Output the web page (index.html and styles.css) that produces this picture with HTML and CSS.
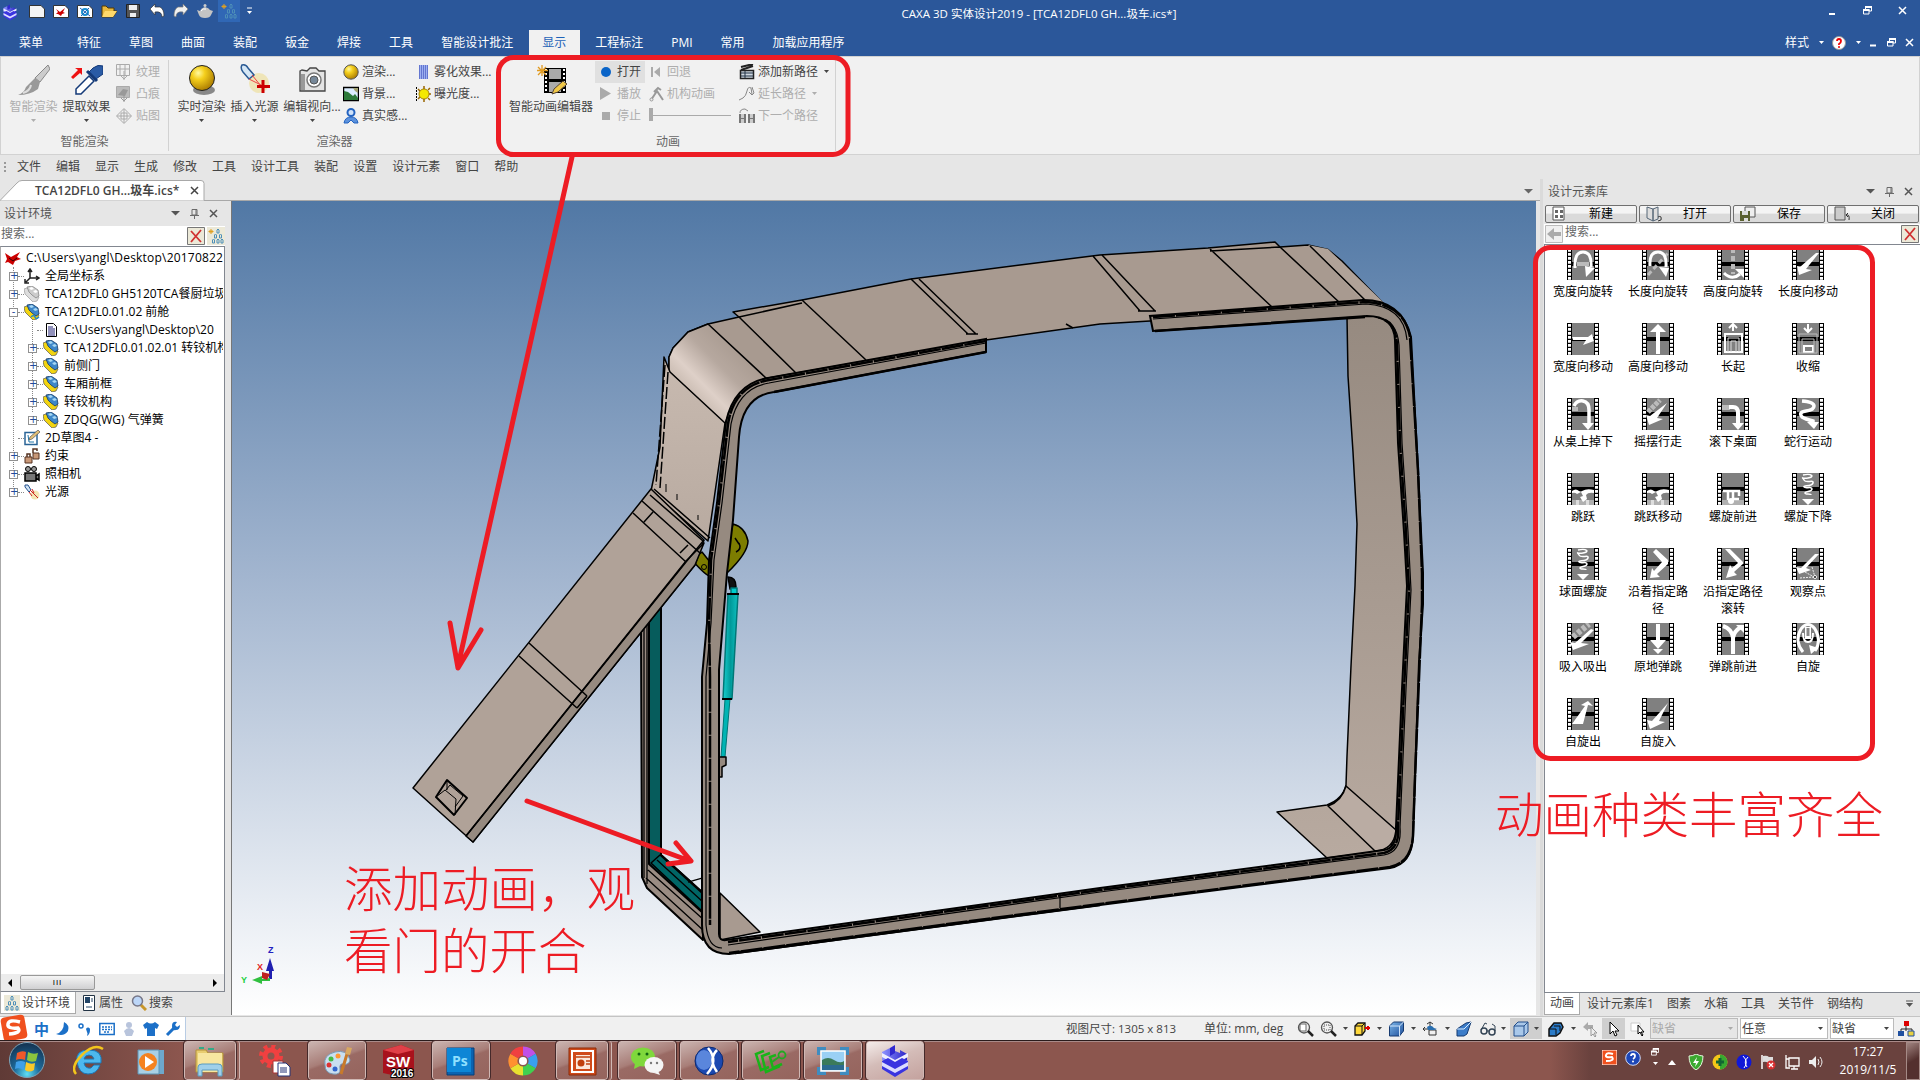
FILE: index.html
```html
<!DOCTYPE html>
<html lang="zh-CN">
<head>
    <meta charset="UTF-8">
    <meta name="viewport" content="width=device-width, initial-scale=1.0">
    <title>CAXA 3D 实体设计2019</title>
    <link rel="stylesheet" href="styles.css">
</head>
<body>
<!-- 图标定义 -->
<svg class="defs" width="0" height="0">
    <defs>
        <linearGradient id="cx" x1="0" y1="0" x2="1" y2="0"><stop offset="0" stop-color="#8f94ff"/><stop offset="1" stop-color="#2a22c8"/></linearGradient>
        <radialGradient id="gold" cx=".35" cy=".3" r=".75"><stop offset="0" stop-color="#fff9a0"/><stop offset=".35" stop-color="#f5cf1c"/><stop offset="1" stop-color="#a87800"/></radialGradient>
        <radialGradient id="orb" cx=".5" cy=".9" r=".9"><stop offset="0" stop-color="#5fe0f5"/><stop offset=".4" stop-color="#1d6c9c"/><stop offset="1" stop-color="#14304e"/></radialGradient>
        <linearGradient id="blu" x1="0" y1="0" x2="1" y2="1"><stop offset="0" stop-color="#7ab6ea"/><stop offset="1" stop-color="#1f4e9a"/></linearGradient>
    </defs>
    <symbol id="i-caxa" viewBox="0 0 32 32"><path d="M3 7l8-4v5l5-2 5 2V5l7 4v6l-12 6-13-6z" fill="url(#cx)"/><path d="M3 8l13 7 13-7v4l-13 7-13-7z" fill="#eeeeff"/><path d="M11 3l5-3v8l-5 3z" fill="#3028d0"/><path d="M3 16l6-3 7 4 7-4 6 3v8l-13 8-13-8z" fill="#3a34e0"/><path d="M3 17l13 7 13-7v4l-13 7-13-7z" fill="#dcdcff"/></symbol>
    <symbol id="i-down" viewBox="0 0 7 4"><path d="M1 0h5L3.500 3z" fill="currentColor"/></symbol>
    <symbol id="i-wide" viewBox="0 0 9 5"><path d="M0 0h9L4.500 4.500z" fill="currentColor"/></symbol>
    <symbol id="i-pin" viewBox="0 0 9 10"><path d="M2 .5h5V6H2zM6 .5V6M0 6.500h9M4.500 6v4" fill="none" stroke="#6a6a6a"/></symbol>
    <symbol id="i-x" viewBox="0 0 9 9"><path d="M1 1l7 7M8 1L1 8" fill="none" stroke="currentColor" stroke-width="1.500"/></symbol>
    <symbol id="i-restore" viewBox="0 0 9 9"><path d="M2.500 3V1h6v4H6M.5 3.500H6V8H.5z" fill="none" stroke="#fff"/><path d="M2 1h7M0 4h6.500" stroke="#fff" stroke-width="2"/></symbol>
    <symbol id="i-redx" viewBox="0 0 18 18"><path d="M.5.5h17v17H.5z" fill="#ece9d8" stroke="#777"/><path d="M4 4l10 11M14 3L4 15" fill="none" stroke="#d03030" stroke-width="1.800"/></symbol>
    <symbol id="i-people" viewBox="0 0 16 16"><path d="M3 1v5M.5 3.500h5M1.500 2l3 3M4.500 2l-3 3" stroke="#e0a020"/><g fill="none" stroke="#4d8fb8"><path d="M9 5V2l1-1 1 1v3zM6.500 10V7l1-1 1 1v3zM11.500 10V7l1-1 1 1v3zM4.500 15v-3l1-1 1 1v3zM9 15v-3l1-1 1 1v3zM13 15v-3l1-1 1 1v3z"/></g></symbol>
    <symbol id="i-box" viewBox="0 0 16 16"><path d="M0 3l3-1 12 9-2 4-4 1-8-8z" fill="#f2d410" stroke="#555" stroke-width=".7"/><path d="M3 1l5-1 3 2 3 2 1 6-3 2-4-3-3-3z" fill="#3d86c8" stroke="#153a66" stroke-width=".8"/><path d="M5 2l3-1 2 2-3 1zM9 5l3-1 2 2-3 1z" fill="#a8d8f4"/></symbol>
    <symbol id="i-graybox" viewBox="0 0 16 16"><path d="M0 3l3-1 12 9-2 4-4 1-8-8z" fill="#ddd" stroke="#999" stroke-width=".7"/><path d="M3 1l5-1 3 2 3 2 1 6-3 2-4-3-3-3z" fill="#ccc" stroke="#888" stroke-width=".8"/><path d="M5 2l3-1 2 2-3 1zM9 5l3-1 2 2-3 1z" fill="#fff"/></symbol>
    <symbol id="i-light" viewBox="0 0 16 16"><circle cx="11" cy="11" r="4.500" fill="#f3e6b4"/><path d="M1 1l3 0 3 5-2 2-4-5z" fill="#cfe3f5" stroke="#234f8c"/><path d="M6 6l8 8M8 5l2 4M5 8l3 4" stroke="#c22"/></symbol>
    <symbol id="i-cube" viewBox="0 0 16 16"><path d="M1 5l4-4h10v9l-4 5H1z" fill="url(#blu)" stroke="#163a70"/><path d="M1 5h10v10M11 5l4-4" fill="none" stroke="#cfe4fa"/></symbol>
    <!-- 胶片底 -->
    <symbol id="film" viewBox="0 0 32 32"><path d="M0 0h32v32H0z"/><path d="M5 0h22v14H5zM5 18h22v14H5z" fill="#808080"/><path d="M2.500 1v31M29.500 1v31" stroke="#fff" stroke-width="3" stroke-dasharray="2.700 1.300"/></symbol>
    <symbol id="hop" viewBox="0 0 32 32"><path d="M5 27h22v5H5z" fill="#b0b0b0"/><path d="M9 27h3v5H9zM19 27h3v5h-3z" fill="#ddd"/><path d="M5 18q4-3 7 0q2 2 3 0q5-3 12-1v3q-6-1-8 2l1 4-4 3-3-5 3-1-2-4-4 2q-2-2-5-1z" fill="#fff"/></symbol>
    <symbol id="spring" viewBox="0 0 32 32"><path d="M11 2c9-2 12 2 5 3s-6-2-4 2 10-1 9 3-10 2-9 4 8-1 8 2-7 2-7 4 6 0 6 2" fill="none" stroke="#fff" stroke-width="1.500"/><path d="M10 26h12l-6 6z" fill="#fff"/></symbol>
</svg>

<div class="app">
    <header class="top">
        <div class="titlebar">
            <svg class="logo" width="16" height="17"><use href="#i-caxa"/></svg>
            <div class="quick">
                <svg width="16" height="16"><path d="M.5 2.500H12l3.500 3.500v8.500H.5z" fill="#f4f4f4" stroke="#333"/></svg>
                <svg width="16" height="16"><path d="M.5 2.500H12l3.500 3.500v8.500H.5z" fill="#fff" stroke="#333"/><path d="M3 6l4 3 5-4-2 4 2 1-3 1-1 2-3-2-2 0 2-2z" fill="#c00"/></svg>
                <svg width="16" height="16"><path d="M.5 2.500H12l3.500 3.500v8.500H.5z" fill="#fff" stroke="#333"/><circle cx="8" cy="9" r="3" fill="none" stroke="#1b8fd0" stroke-width="2"/><path d="M3 5l10 8M12 5l-8 8" stroke="#26b"/></svg>
                <svg width="16" height="16"><path d="M1 14V3h4l2 2h6v3h3l-4 6z" fill="#e8b93e" stroke="#553a00"/><path d="M4 8h12l-4 6H1z" fill="#ffd96b"/></svg>
                <svg width="16" height="16"><path d="M1.500 1.500h13v13h-13z" fill="#555" stroke="#222"/><path d="M4 2h8v5H4zM5 10h6v4H5z" fill="#eee"/></svg>
                <svg width="16" height="16"><path d="M1 6l5-5v3h5q4 2 4 9l-2 1q0-6-7-5v3z" fill="#fff" stroke="#333" stroke-width=".7"/></svg>
                <svg width="16" height="16"><path d="M15 6l-5-5v3H5q-4 2-4 9l2 1q0-6 7-5v3z" fill="#f0f0f0" stroke="#777" stroke-width=".7"/></svg>
                <svg width="16" height="16"><path d="M0 7l3 1q1-3 5-4 4 1 5 3l3 1-2 4q-1 3-6 3t-6-3z" fill="#c4c4c4"/><circle cx="8" cy="2.500" r="1.500" fill="#ccc"/><path d="M4 8q2-3 5-2" stroke="#fff" fill="none"/></svg>
                <span class="quick-on"><svg width="16" height="16"><use href="#i-people"/></svg></span>
                <svg class="more" width="7" height="8"><path d="M1 1h5" stroke="#fff"/><path d="M1 4h5L3.500 7z" fill="#fff"/></svg>
            </div>
            <div class="title">CAXA 3D 实体设计2019 - [TCA12DFL0 GH...圾车.ics*]</div>
            <div class="winbtns">
                <svg width="9" height="9"><path d="M1 8h6" stroke="#fff" stroke-width="2"/></svg>
                <svg width="9" height="9"><use href="#i-restore"/></svg>
                <svg width="9" height="9"><use href="#i-x"/></svg>
            </div>
        </div>
        <nav class="tabs">
            <a class="first">菜单</a><a>特征</a><a>草图</a><a>曲面</a><a>装配</a><a>钣金</a><a>焊接</a><a>工具</a><a>智能设计批注</a><a class="active">显示</a><a>工程标注</a><a>PMI</a><a>常用</a><a>加载应用程序</a>
            <div class="tabs-right">
                <span>样式</span>
                <svg width="7" height="4"><use href="#i-down"/></svg>
                <svg class="help" width="14" height="14"><circle cx="7" cy="7" r="6.500" fill="#fff" stroke="#999"/><path d="M5 5q0-2 2-2t2 2-2 3v1" fill="none" stroke="#e00" stroke-width="1.800"/><circle cx="7" cy="11" r="1" fill="#e00"/></svg>
                <svg width="7" height="4"><use href="#i-down"/></svg>
                <svg width="9" height="9"><path d="M1 7.500h6" stroke="#fff" stroke-width="2"/></svg>
                <svg width="9" height="9"><use href="#i-restore"/></svg>
                <svg width="9" height="9"><use href="#i-x"/></svg>
            </div>
        </nav>
    </header>

    <!-- 功能区 -->
    <section class="ribbon">
        <div class="group g1">
            <div class="group-body">
                <div class="big off"><svg width="32" height="32"><path d="M30 1l2 4-10 13-5-4z" fill="#ccc" stroke="#888"/><path d="M17 14l5 4-2 7Q12 31 0 31q6-2 8-8z" fill="#999"/><path d="M5 29q7-2 8-8" stroke="#ddd" fill="none" stroke-width="2"/></svg><span>智能渲染</span><svg width="7" height="4"><use href="#i-down"/></svg></div>
                <div class="big"><svg width="32" height="32"><path d="M0 13l7-7-3-2h7v7l-2-2-7 6z" fill="#e11"/><path d="M22 4q5-4 10-2v8l-7 5-7-7z" fill="#2a5ba5" stroke="#143a78"/><path d="M16 7l10 10" stroke="#143a78" stroke-width="3"/><path d="M18 12L5 25v5h5l13-13z" fill="#fff" stroke="#143a78" stroke-width="1.500"/></svg><span>提取效果</span><svg width="7" height="4"><use href="#i-down"/></svg></div>
                <div class="small-col off c1">
                    <div><svg width="16" height="16"><path d="M.5.500h13v11H.500zM4 1v10M9 1v10M1 5h12M8 7v9M5 12l3 3 3-3" fill="none" stroke="#aaa"/></svg>纹理</div>
                    <div><svg width="16" height="16"><path d="M.5.500h13v11H.500z" fill="#bbb" stroke="#aaa"/><path d="M2 9l5-6 5 1-3 6z" fill="#999"/><path d="M8 7v9M5 12l3 3 3-3" stroke="#999" fill="none"/></svg>凸痕</div>
                    <div><svg width="16" height="16"><path d="M8 .5L15.500 8 8 15.500.5 8zM8 1v14M1 8h14M5 5h6v6H5z" fill="none" stroke="#aaa"/></svg>贴图</div>
                </div>
            </div>
            <div class="group-name">智能渲染</div>
        </div>
        <div class="group g2">
            <div class="group-body">
                <div class="big"><svg width="32" height="32"><ellipse cx="18" cy="26" rx="11" ry="5" fill="#888"/><circle cx="16" cy="14" r="12.500" fill="url(#gold)" stroke="#222"/></svg><span>实时渲染</span><svg width="7" height="4"><use href="#i-down"/></svg></div>
                <div class="big"><svg width="32" height="32"><circle cx="20" cy="19" r="10" fill="#efe5b8"/><path d="M3 1q4-1 6 3l6 7-5 4-6-7Q1 4 3 1z" fill="#d6e7f5" stroke="#2b5a94" stroke-width="1.500"/><path d="M13 11l9 11M10 15l14 7" stroke="#e44"/><path d="M24 16v13M18 22.500h13" stroke="#c00" stroke-width="3"/></svg><span>插入光源</span><svg width="7" height="4"><use href="#i-down"/></svg></div>
                <div class="big cam"><svg width="32" height="32"><path d="M4 7l2-1 5 1 3-3h6l3 3h6v20H4z" fill="#e4e4e4" stroke="#444" stroke-width="1.300"/><path d="M5 10v16h4V10z" fill="#999"/><circle cx="18" cy="16" r="7" fill="#fff" stroke="#777" stroke-width="1.500"/><circle cx="18" cy="16" r="4" fill="#789" stroke="#555"/></svg><span>编辑视向...</span><svg width="7" height="4"><use href="#i-down"/></svg></div>
                <div class="small-col c2">
                    <div><svg width="16" height="16"><circle cx="8" cy="8" r="7.200" fill="url(#gold)" stroke="#555"/></svg>渲染...</div>
                    <div><svg width="16" height="16"><path d="M.5 1.500h15v13H.5z" fill="#dceeff" stroke="#000" stroke-width="1.500"/><path d="M1 5l4 1 5 4 2-2 3 4v2H1z" fill="#2d7a3a"/><path d="M10 2h5v5l-3-2z" fill="#a0a070"/></svg>背景...</div>
                    <div><svg width="16" height="16"><circle cx="8" cy="4.500" r="3.500" fill="#cfe2fa" stroke="#2363c0" stroke-width="2"/><path d="M1 15q1-6 7-6t7 6l-4 0-3-3-3 3z" fill="#5b91dc" stroke="#2363c0"/></svg>真实感...</div>
                </div>
                <div class="small-col c3">
                    <div><svg width="16" height="16"><path d="M4 1h9v14H4z" fill="#9db0f0"/><path d="M4 2h9M4 4h9M4 6h9M4 8h9M4 10h9M4 12h9M4 14h9" stroke="#2b3cb0" stroke-dasharray="1 1"/></svg>雾化效果...</div>
                    <div><svg width="16" height="16"><circle cx="9" cy="8" r="5" fill="#f4e800" stroke="#a80"/><path d="M9 0v3M9 13v3M3 3l2 2M13 12l2 2M3 13l2-2M13 4l2-2M14 8h2" stroke="#960" stroke-width="1.500"/><path d="M1.500 1v14" stroke="#000" stroke-dasharray="2 1"/></svg>曝光度...</div>
                </div>
            </div>
            <div class="group-name">渲染器</div>
        </div>
        <div class="group g3">
            <div class="group-body">
                <div class="big anim"><svg width="34" height="32"><path d="M10 4h22v25H10z"/><path d="M15 5h12v10H15zM15 18h12v10H15z" fill="#aaa"/><path d="M12 5v24M30 5v24" stroke="#fff" stroke-width="2" stroke-dasharray="2 2"/><path d="M8 1v11M3 6.500h11M4 3l8 8M12 3l-8 8" stroke="#e09a20" stroke-width="1.300"/><path d="M18 30l2-5 9-8 4 3-9 8z" fill="#f0c848" stroke="#543"/></svg><span>智能动画编辑器</span></div>
                <div class="small-col c4">
                    <div class="on"><svg width="16" height="16"><circle cx="8" cy="8" r="5" fill="#0a64c8"/></svg>打开</div>
                    <div class="off"><svg width="16" height="16"><path d="M2 1l11 6.500L2 14z" fill="#aaa"/></svg>播放</div>
                    <div class="off"><svg width="16" height="16"><path d="M4 4h8v8H4z" fill="#aaa"/></svg>停止</div>
                </div>
                <div class="small-col c5 off">
                    <div><svg width="16" height="16"><path d="M3 3v10" stroke="#aaa" stroke-width="2"/><path d="M11 3v10L5 8z" fill="#aaa"/></svg>回退</div>
                    <div><svg width="16" height="16"><path d="M2 14l6-9 6 9M5 6l4-4 3 2" fill="none" stroke="#999" stroke-width="2"/><circle cx="2.500" cy="13.500" r="1.500" fill="#eee" stroke="#999"/></svg>机构动画</div>
                    <div class="slider"><i></i></div>
                </div>
                <div class="small-col c6">
                    <div><svg width="16" height="16"><path d="M2 6l12-4M2 3l12-3" stroke="#222" stroke-width="2"/><path d="M1.500 6.500h13v8h-13z" fill="#cfd8e0" stroke="#222" stroke-width="1.500"/><path d="M2 9h12M2 12h12M6 7v7" stroke="#234"/></svg>添加新路径<svg class="ar" width="7" height="4"><use href="#i-down"/></svg></div>
                    <div class="off"><svg width="16" height="16"><path d="M0 14l4-2q3-2 4-7t4-3l1 6M10 6l3 3 2-2-2-6" fill="none" stroke="#888"/></svg>延长路径<svg class="ar" width="7" height="4"><use href="#i-down"/></svg></div>
                    <div class="off"><svg width="16" height="16"><path d="M0 6h7v9H0zM9 6h7v9H9z" fill="#777"/><path d="M2 6h3v4H2zM2 11h3v4H2zM11 6h3v4h-3zM11 11h3v4h-3z" fill="#ccc"/><path d="M1 5q0-4 5-4l3 2" fill="none" stroke="#888"/></svg>下一个路径</div>
                </div>
            </div>
            <div class="group-name">动画</div>
        </div>
    </section>

    <nav class="menubar"><i class="grip"></i><a>文件</a><a>编辑</a><a>显示</a><a>生成</a><a>修改</a><a>工具</a><a>设计工具</a><a>装配</a><a>设置</a><a>设计元素</a><a>窗口</a><a>帮助</a></nav>

    <main class="body">
        <div class="work">
            <div class="docbar">
                <div class="doctab"><svg class="tabshape" width="205" height="21"><path d="M0 20.500L17 3q2-2.500 5-2.500h179q3 0 3 3v17" fill="#fff" stroke="#a8a8a8"/></svg><b>TCA12DFL0 GH...圾车.ics*</b><svg width="9" height="9"><use href="#i-x"/></svg></div>
                <svg class="doclist" width="9" height="5"><use href="#i-wide"/></svg>
            </div>
            <div class="work-row">
                <aside class="left">
                    <div class="panel-head"><span>设计环境</span><svg width="9" height="5"><use href="#i-wide"/></svg><svg width="9" height="10"><use href="#i-pin"/></svg><svg width="9" height="9"><use href="#i-x"/></svg></div>
                    <div class="search"><span>搜索...</span><svg width="18" height="18"><use href="#i-redx"/></svg><span class="tan"><svg width="16" height="16"><use href="#i-people"/></svg></span></div>
                    <div class="tree">
                        <ul>
                            <li class="root"><svg width="16" height="16"><path d="M0 3l6 4 9-5-3 5 4 2-6 2-2 4-5-3-3 1 2-4z" fill="#c00"/><path d="M4 8l4 3 4-3" stroke="#300" fill="none"/></svg>C:\Users\yangl\Desktop\20170822</li>
                            <li class="l1"><i class="ex">+</i><svg width="16" height="16"><path d="M6 10V2M6 10h9M6 10l-4 4M4 4l2-3 2 3M12 8l3 2-3 2M1 11v4h4" fill="none" stroke="#222" stroke-width="1.500"/></svg>全局坐标系</li>
                            <li class="l1"><i class="ex">+</i><svg width="16" height="16"><use href="#i-graybox"/></svg>TCA12DFL0 GH5120TCA餐厨垃圾</li>
                            <li class="l1"><i class="ex">-</i><svg width="16" height="16"><use href="#i-box"/><path d="M7 13q3-3 4 0t4 0" fill="none" stroke="#28c" stroke-width="1.500"/></svg>TCA12DFL0.01.02 前舱</li>
                            <li class="l2"><i class="ex none"></i><svg width="16" height="16"><path d="M3.500 1.500h7l3 3v10h-10z" fill="#fff" stroke="#000"/><path d="M5 5h5M5 7h7M5 9h7M5 11h7M5 13h7" stroke="#227"/></svg>C:\Users\yangl\Desktop\20</li>
                            <li class="l2"><i class="ex">+</i><svg width="16" height="16"><use href="#i-box"/></svg>TCA12DFL0.01.02.01 转铰机构</li>
                            <li class="l2"><i class="ex">+</i><svg width="16" height="16"><use href="#i-box"/></svg>前侧门</li>
                            <li class="l2"><i class="ex">+</i><svg width="16" height="16"><use href="#i-box"/></svg>车厢前框</li>
                            <li class="l2"><i class="ex">+</i><svg width="16" height="16"><use href="#i-box"/></svg>转铰机构</li>
                            <li class="l2"><i class="ex">+</i><svg width="16" height="16"><use href="#i-box"/></svg>ZDQG(WG) 气弹簧</li>
                            <li class="l1"><i class="ex none"></i><svg width="16" height="16"><path d="M1 2.500h12v12H1z" fill="#fff" stroke="#2a6496" stroke-width="1.500"/><path d="M4 5l1 7h5" fill="none" stroke="#27a"/><path d="M5 10l1-3 8-7 2 2-8 7z" fill="#e2c078" stroke="#555" stroke-width=".7"/></svg>2D草图4 -</li>
                            <li class="l1"><i class="ex">+</i><svg width="16" height="16"><path d="M1 9h7v6H1zM9 5h6v6H9z" fill="#c89878" stroke="#532"/><path d="M3 9V6h3v3M9 5V1h4v2" fill="none" stroke="#532" stroke-width="1.500"/></svg>约束</li>
                            <li class="l1"><i class="ex">+</i><svg width="16" height="16"><circle cx="4" cy="3" r="2.500" fill="#999" stroke="#000"/><circle cx="10" cy="3" r="2.500" fill="#999" stroke="#000"/><path d="M1 7h11v8H1zM12 10l3-2v6l-3-2z" fill="#777" stroke="#000" stroke-width="1.500"/></svg>照相机</li>
                            <li class="l1"><i class="ex">+</i><svg width="16" height="16"><use href="#i-light"/></svg>光源</li>
                        </ul>
                        <div class="hscroll"><svg width="5" height="8"><path d="M4 0v8L0 4z"/></svg><span class="thumb">III</span><svg width="5" height="8"><path d="M1 0v8l4-4z"/></svg></div>
                    </div>
                    <div class="left-tabs">
                        <a class="active"><svg width="16" height="16"><path d="M0 0h16v16H0z" fill="#ece9d8"/><path d="M7 5V2l1-1 1 1v3zM4.500 10V7l1-1 1 1v3zM9.500 10V7l1-1 1 1v3zM2 15v-3l1-1 1 1v3zM7 15v-3l1-1 1 1v3zM12 15v-3l1-1 1 1v3z" fill="none" stroke="#4d8fb8"/></svg>设计环境</a>
                        <a><svg width="16" height="16"><path d="M2.500.500h11v15h-11z" fill="#fff" stroke="#234"/><path d="M4 2h5v6H4z" fill="#246"/><path d="M11 3v4M5 12h6" stroke="#246"/></svg>属性</a>
                        <a><svg width="16" height="16"><path d="M9 9l6 6" stroke="#c8962a" stroke-width="3"/><circle cx="6.500" cy="6" r="5" fill="#bcd6f8" stroke="#778" stroke-width="1.500"/></svg>搜索</a>
                    </div>
                </aside>

                <!-- 三维视图 -->
                <div class="view">
                    <svg width="1305" height="813" viewBox="232 201 1305 813">
                        <defs>
                            <linearGradient id="bend" gradientUnits="userSpaceOnUse" x1="692" y1="398" x2="742" y2="348"><stop offset="0" stop-color="#c8bab0"/><stop offset=".25" stop-color="#ded0c8"/><stop offset=".6" stop-color="#b6a89f"/><stop offset="1" stop-color="#a89a90"/></linearGradient>
                            <linearGradient id="side" x1="0" y1="0" x2="0" y2="1"><stop offset="0" stop-color="#968a80"/><stop offset="1" stop-color="#b8aaa0"/></linearGradient>
                            <linearGradient id="side2" x1="0" y1="0" x2="0" y2="1"><stop offset="0" stop-color="#c8bab0"/><stop offset="1" stop-color="#b8aaa0"/></linearGradient>
                            <linearGradient id="gas" x1="0" y1="0" x2="1" y2="0"><stop offset="0" stop-color="#18d0d0"/><stop offset=".5" stop-color="#009a9a"/><stop offset="1" stop-color="#10c0c0"/></linearGradient>
                        </defs>
                        <g stroke="#000" stroke-width="1.500" stroke-linejoin="round">
                            <!-- 右侧板 -->
                            <path d="M1347 317L1348 376 1353 452 1357 524 1355 586 1351 666 1347 756 1346 785Q1343 799 1327 805L1277 812 1327 858 1390 850 1404 800 1410 570 1396 330 1380 314z" fill="url(#side)"/>
                            <path d="M1346 786Q1342 801 1328 806L1375 851Q1394 850 1396 830z" fill="#baaca3"/>
                            <path d="M720 893l40 39-40 8z" fill="#a89a90"/>
                            <!-- 顶板 -->
                            <path d="M669 372l0-15 4-9 15-16 20-8 31-7-6-5 69-12 109-21 109-14 80-10 108-7 67-6 5 5 28-2 20 4.500 14 11.500 41 42-233 18-50 3-114 16-218 38q-30 8-39 34z" fill="#a89a90"/>
                            <path d="M669 372l0-15 4-9 15-16 20-8 58 54q-30 10-41 46z" fill="url(#bend)"/>
                            <path d="M1308 245l20 4 55 53-20-1z" fill="#b0a298" stroke="none"/>
                            <path d="M739 317l58 57M739 317l63-14M802 300l64 60M911 279l57 55M919 279l57 55M966 334h12M1093 256l47 55M1102 255l53 56M1138 311h18M1210 249l62 58M1210 251l70-4M1280 247l60 56M1310 246l55 54M1066 324l7 4" fill="none"/>
                            <!-- 左侧上板 -->
                            <path d="M664 357l-4 90-9 44 57 50 17-118-55-51z" fill="url(#side2)"/>
                            <path d="M668 372l-8 116M665 365l-9 120" fill="none" stroke-dasharray="12 3"/>
                            <path d="M666 484v8M677 494v6M698 515v5" stroke-width="1"/>
                            <!-- 下部门框 -->
                            <path d="M641 625l20-24v254l42 38v47l-56-52-5-11z" fill="#9a8c83" stroke-width="2"/>
                            <path d="M649 616l12-12v251l42 38v20l-54-49z" fill="#065c5c" stroke-width="2"/>
                            <path d="M651 863l9-8 43 39v18z" fill="#006666"/>
                            <path d="M644 628v250M647 622v262M648 870l56 50M646 878l58 53M657 860l46 42M688 882l14-4v15" fill="none" stroke-width="1.300"/>
                            <!-- 铰链 -->
                            <path d="M733 524q12 3 15 17 0 12-21 32l-6-2zM692 560l10-8 8 10v14q-4 0-18-16z" fill="#7d7d00"/>
                            <path d="M735 538l4 6M736 552q6-3 3-9" fill="none"/>
                            <circle cx="704" cy="567" r="2.500" fill="none" stroke-width="1"/>
                            <!-- 打开的门 -->
                            <path d="M651 489l-238 299 60 54 222-277 9-25z" fill="#b0a298"/>
                            <path d="M466 836l7 6 222-277 9-22-18 18z" fill="#968a80"/>
                            <path d="M466 836L686 562 704 540M642 501l58 52M633 513l53 49M654 489l56 49M650 495l53 46M653 512l-9 10M688 545l-8 8M529 643l58 53M519 656l58 52M587 696l-10 12" fill="none"/>
                            <path d="M447 780l20 18-13 17-18-18z" fill="#b0a298" stroke-width="2"/>
                            <path d="M446 790l4-5 13 11-8 11M436 797l9-7 11 9-1 16M447 780v10" fill="none" stroke-width="1"/>
                            <!-- 气弹簧 -->
                            <path d="M728 577q8 0 8 10l-6 2z" fill="#111"/>
                            <path d="M731 588h6v6h-6z" fill="#0cc" stroke="#077"/>
                            <path d="M728 594l10 0-6 105h-9z" fill="url(#gas)" stroke="#077"/>
                            <path d="M725 699h5l-5 58h-4z" fill="#00b4b4" stroke="#077" stroke-width="1"/>
                            <path d="M722 699h10M727 594h12" stroke-width="2"/>
                            <path d="M719 757h7v8l-4 2v10h-3z" fill="#968a80"/>
                        </g>
                        <!-- 前框 -->
                        <path class="frame" fill-rule="evenodd" d="M986 339L768 378Q734 384 726 422L717 503 709 560 707 623 702 677V925Q702 954 729 954L1100 905 1390 868Q1412 864 1413 836L1415 778 1419 662 1423 604 1423 573 1418 470 1411 337Q1402 300 1363 300L1150 316 1153 331 1367 316Q1394 316 1395 340L1398 443 1404 532 1407 586 1402 689 1396 827Q1397 848 1384 850L1327 858 1100 888 726 940Q719 941 719 934V670L727 573 733 520 739 437Q742 396 774 392L986 352z"/>
                        <path class="seam" d="M986 343L769 383Q738 388 731 424L722 503 714 560 711 623 706 677V925Q708 948 722 948"/>
                        <path class="seam heavy" d="M986 341L769 380Q734 386 728 424L719 503 711 560 709 623 710 677V925"/>
                        <path class="seam" d="M1153 319L1366 304Q1404 306 1407 340"/>
                        <path class="seam heavy" d="M1153 317L1366 302Q1404 304 1410 337L1418 470 1422 573 1422 604 1415 778 1413 836Q1411 863 1390 867L1100 904 729 953"/>
                        <path class="seam" d="M1378 318Q1397 320 1399 345L1402 443 1408 532 1411 590 1406 689 1400 827Q1402 852 1384 855L1100 892 728 945"/>
                        <path class="seam heavy" d="M1385 320Q1396 325 1397 345L1400 443 1406 532 1409 590 1404 689 1398 827Q1400 849 1384 853L1100 890 728 942"/>
                        <path class="dash" d="M986 352L774 392M1155 331L1365 317M1100 905L735 953"/>
                        <path class="seam" d="M1060 894v14"/>
                        <!-- 坐标轴 -->
                        <path d="M270 958l4 13h-2v8h-3v-8h-3z" fill="#2020b0"/>
                        <path d="M252 980l10-4v3l8-1v3h-8v3z" fill="#30c040"/>
                        <path d="M262 972l8 2-3 6-5-2z" fill="#c02020"/>
                        <g class="axis"><text x="268" y="953" fill="#2020c0">Z</text><text x="257" y="970" fill="#e02020">X</text><text x="241" y="983" fill="#20d040">Y</text></g>
                    </svg>
                </div>
            </div>
        </div>

        <aside class="right">
            <div class="panel-head"><span>设计元素库</span><svg width="9" height="5"><use href="#i-wide"/></svg><svg width="9" height="10"><use href="#i-pin"/></svg><svg width="9" height="9"><use href="#i-x"/></svg></div>
            <div class="lib-btns">
                <button><svg width="16" height="16"><path d="M1 1h11v13H1z" fill="#fff" stroke="#555"/><path d="M3 4h3v3H3zM8 4h3v3H8zM3 9h3v3H3zM8 9h3v3H8z" fill="#666"/></svg><span>新建</span></button>
                <button><svg width="16" height="16"><path d="M1 1l6 2v12l-6-3zM7 3l5-2v12l-5 2z" fill="#ddd" stroke="#567"/><path d="M12 11q4-2 3 3l-3 1" fill="none" stroke="#333"/></svg><span>打开</span></button>
                <button><svg width="16" height="16"><path d="M5 1h10v10H5z" fill="#eee" stroke="#555"/><path d="M0 5h10v10H0z" fill="#5a6030"/><path d="M2 5h6v4H2zM4 12h4v3H4z" fill="#ddd"/></svg><span>保存</span></button>
                <button><svg width="16" height="16"><path d="M1 1h10v13H1z" fill="#ccc" stroke="#555"/><path d="M12 9q4-1 3 5M12 9l2-2M12 9l2 2" fill="none" stroke="#333"/></svg><span>关闭</span></button>
            </div>
            <div class="search"><svg class="back" width="18" height="18"><path d="M.5.500h17v17H.500z" fill="#f0f0f0" stroke="#bbb"/><path d="M2 9l7-6v4h7v4H9v4z" fill="#aaa"/></svg><span>搜索...</span><svg width="18" height="18"><use href="#i-redx"/></svg></div>
            <div class="lib">
                <figure><svg width="32" height="32"><use href="#film"/><path d="M10 14h12v4H10z" fill="#bbb"/><path d="M8 20Q7 4 16 4q9 0 8 15" fill="none" stroke="#fff" stroke-width="3"/><path d="M18 18l10 2-9 9z" fill="#fff"/></svg><figcaption>宽度向旋转</figcaption></figure>
                <figure><svg width="32" height="32"><use href="#film"/><path d="M6 27L26 5" stroke="#bbb" stroke-width="3" stroke-dasharray="5 3"/><path d="M8 18Q7 4 16 4q9 0 8 15" fill="none" stroke="#fff" stroke-width="3"/><path d="M17 19l10 1-3 9z" fill="#fff"/></svg><figcaption>长度向旋转</figcaption></figure>
                <figure><svg width="32" height="32"><use href="#film"/><path d="M16 0v26" stroke="#bbb" stroke-width="4" stroke-dasharray="5 3"/><path d="M7 25q8 8 16 1" fill="none" stroke="#fff" stroke-width="3"/><path d="M18 21h9v9z" fill="#fff"/></svg><figcaption>高度向旋转</figcaption></figure>
                <figure><svg width="32" height="32"><use href="#film"/><path d="M24 5h3L14 21l6 1-13 5-2-9 3 1z" fill="#fff"/></svg><figcaption>长度向移动</figcaption></figure>

                <figure><svg width="32" height="32"><use href="#film"/><path d="M5 14h16l4-3 2 7-11 4 3-5H6z" fill="#fff"/></svg><figcaption>宽度向移动</figcaption></figure>
                <figure><svg width="32" height="32"><use href="#film"/><path d="M16 1l8 8h-6v22h-4V9H8z" fill="#fff"/></svg><figcaption>高度向移动</figcaption></figure>
                <figure><svg width="32" height="32"><use href="#film"/><path d="M16 8V1M12 5l4-4 4 4M8 29V11h17v18z" fill="none" stroke="#fff" stroke-width="2"/><path d="M11 29V15h11v14M14 29V18h5v11" fill="none" stroke="#ddd"/></svg><figcaption>长起</figcaption></figure>
                <figure><svg width="32" height="32"><use href="#film"/><path d="M16 1v7M12 5l4 4 4-4M12 23h9v6h-9z" fill="none" stroke="#fff" stroke-width="2"/><path d="M7 30V11h18v19zM10 30V16h12v14" fill="none" stroke="#bbb"/></svg><figcaption>收缩</figcaption></figure>

                <figure><svg width="32" height="32"><use href="#film"/><path d="M5 9h6v4H5z" fill="#bbb"/><path d="M7 8q3-6 9-5t6 9v14" fill="none" stroke="#fff" stroke-width="3.500"/><path d="M15 25h12l-6 7z" fill="#fff"/></svg><figcaption>从桌上掉下</figcaption></figure>
                <figure><svg width="32" height="32"><use href="#film"/><path d="M6 14L18 2" stroke="#bbb" stroke-width="5" stroke-dasharray="4 1"/><path d="M25 5L15 20l6 1L7 27 4 17l4 1z" fill="#fff"/></svg><figcaption>摇摆行走</figcaption></figure>
                <figure><svg width="32" height="32"><use href="#film"/><path d="M5 7h8v5H5z" fill="#bbb"/><path d="M12 9h4q5 0 5 6v11" fill="none" stroke="#fff" stroke-width="4"/><path d="M15 25h12l-6 7z" fill="#fff"/></svg><figcaption>滚下桌面</figcaption></figure>
                <figure><svg width="32" height="32"><use href="#film"/><path d="M10 3q12 1 12 5t-8 5-4 6q3 2 11 4v4" fill="none" stroke="#fff" stroke-width="3.500"/><path d="M15 24h12l-5 7z" fill="#fff"/></svg><figcaption>蛇行运动</figcaption></figure>

                <figure><svg width="32" height="32"><use href="#film"/><use href="#hop"/></svg><figcaption>跳跃</figcaption></figure>
                <figure><svg width="32" height="32"><use href="#film"/><use href="#hop"/></svg><figcaption>跳跃移动</figcaption></figure>
                <figure><svg width="32" height="32"><use href="#film"/><path d="M5 27h22v5H5z" fill="#b0b0b0"/><path d="M6 18h16v5M11 18v9M16 18v8h6" fill="none" stroke="#fff" stroke-width="2.500"/><circle cx="14" cy="28" r="3" fill="#fff"/></svg><figcaption>螺旋前进</figcaption></figure>
                <figure><svg width="32" height="32"><use href="#film"/><use href="#spring"/></svg><figcaption>螺旋下降</figcaption></figure>

                <figure><svg width="32" height="32"><use href="#film"/><use href="#spring"/></svg><figcaption>球面螺旋</figcaption></figure>
                <figure><svg width="32" height="32"><use href="#film"/><path d="M14 1l12 11v4L15 26l3 3-10 1 2-10 2 3 8-9-9-10z" fill="#fff"/></svg><figcaption>沿着指定路径</figcaption></figure>
                <figure><svg width="32" height="32"><use href="#film"/><path d="M8 1h5l14 14-10 9 3 3-11 3 4-13 2 3 6-5z" fill="#fff"/></svg><figcaption>沿指定路径滚转</figcaption></figure>
                <figure><svg width="32" height="32"><use href="#film"/><path d="M23 6h4L14 20l5 2-12 4-3-7 5 1z" fill="#fff"/><path d="M8 30l14-1M13 24l9 5M20 19l3 10" stroke="#eee" stroke-dasharray="2 1"/><circle cx="23" cy="29" r="1.500" stroke="#fff"/></svg><figcaption>观察点</figcaption></figure>

                <figure><svg width="32" height="32"><use href="#film"/><path d="M6 14L22 1" stroke="#bbb" stroke-width="6" stroke-dasharray="4 2"/><path d="M24 6l3 1-13 13 8 1L6 27 3 19l5 1z" fill="#fff"/></svg><figcaption>吸入吸出</figcaption></figure>
                <figure><svg width="32" height="32"><use href="#film"/><path d="M14 1h4v16h6l-8 9-8-9h6zM11 26h10l-5 5z" fill="#fff"/></svg><figcaption>原地弹跳</figcaption></figure>
                <figure><svg width="32" height="32"><use href="#film"/><path d="M16 31V14M6 3q9 3 10 12 1-7 8-11" fill="none" stroke="#fff" stroke-width="4"/><path d="M19 2h8v8z" fill="#fff"/></svg><figcaption>弹跳前进</figcaption></figure>
                <figure><svg width="32" height="32"><use href="#film"/><path d="M11 29Q2 18 9 6q7-9 14 0 7 12 0 22" fill="none" stroke="#fff" stroke-width="3"/><path d="M11 10q0 9 5 9t5-9" fill="none" stroke="#fff" stroke-width="2"/><path d="M13 4h6v12h-6z" fill="#fff"/><path d="M14.500 5h3v8h-3z" fill="#888"/><path d="M17 22l9 3-7 6z" fill="#fff"/></svg><figcaption>自旋</figcaption></figure>

                <figure><svg width="32" height="32"><use href="#film"/><path d="M5 26L18 8l-4-1 7-4 5 5-5-1-5 19z" fill="#fff"/></svg><figcaption>自旋出</figcaption></figure>
                <figure><svg width="32" height="32"><use href="#film"/><path d="M26 5l-9 18 6 1-15 7-3-9 5 1z" fill="#fff"/></svg><figcaption>自旋入</figcaption></figure>
            </div>
            <div class="lib-tabs"><a class="active">动画</a><a>设计元素库1</a><a>图素</a><a>水箱</a><a>工具</a><a>关节件</a><a>钢结构</a><svg width="7" height="8"><path d="M0 1h7" stroke="#555"/><path d="M0 3h7L3.500 7z" fill="#555"/></svg></div>
        </aside>
    </main>

    <footer class="status">
        <div class="ime">
            <svg width="28" height="28"><rect x="2" y="2" width="24" height="24" rx="4" fill="#f0501e" transform="rotate(-10 14 14)"/><path d="M20 8q-11-3-12 2t10 4q4 5-9 6" fill="none" stroke="#fff" stroke-width="3.500"/></svg>
            <b>中</b>
            <svg width="16" height="16"><path d="M9 1q6 3 4 9-4 6-12 3 8-2 8-12z" fill="#1c70c8"/></svg>
            <svg width="16" height="16"><circle cx="4" cy="5" r="2" fill="none" stroke="#1c70c8" stroke-width="1.500"/><path d="M9 8a2 2 0 114 1q0 4-3 6 1-3 0-4z" fill="#1c70c8"/></svg>
            <svg width="16" height="16"><path d="M.8 2.500h14.400v11H.8z" fill="none" stroke="#1c70c8" stroke-width="1.500"/><path d="M3 6h10M3 8.500h10M5 11h6" stroke="#1c70c8" stroke-width="1.500" stroke-dasharray="2 1"/></svg>
            <svg width="16" height="16"><circle cx="8" cy="4" r="3" fill="#b8c4dc"/><path d="M3 10q5-6 10 0l-2 5H5z" fill="#b8c4dc"/></svg>
            <svg width="16" height="16"><path d="M4 1q4 3 8 0l4 3-2 4-2-1v8H4V7L2 8 0 4z" fill="#1c70c8"/></svg>
            <svg width="16" height="16"><path d="M2 14l7-7" stroke="#1c70c8" stroke-width="3"/><path d="M15 4l-3 2-2-2 2-3q-5-1-5 4t4 4q4 0 4-5z" fill="#1c70c8"/></svg>
        </div>
        <span class="st-size">视图尺寸: 1305 x 813</span>
        <span class="st-unit">单位: mm, deg</span>
        <div class="st-icons">
            <svg width="17" height="16"><path d="M3 3h6v7H3z" fill="#fff" stroke="#666"/><circle cx="7" cy="6.500" r="5.500" fill="none" stroke="#555" stroke-width="1.300"/><path d="M11 10l5 5" stroke="#222" stroke-width="2.500"/></svg>
            <svg width="17" height="16"><path d="M4 4h6v5H4z" fill="none" stroke="#555" stroke-dasharray="1 1"/><circle cx="7" cy="6.500" r="5.500" fill="none" stroke="#555" stroke-width="1.300"/><path d="M11 10l5 5" stroke="#222" stroke-width="2.500"/></svg>
            <svg class="ar" width="7" height="4"><use href="#i-down"/></svg>
            <svg width="17" height="16"><path d="M1 5l3-3h7v8l-3 4H1z" fill="#ffd83a" stroke="#111" stroke-width="1.300"/><path d="M1 5h7v9M8 5l3-3" fill="none" stroke="#111"/><path d="M11 7h5M14 5v4" stroke="#d00" stroke-width="2"/></svg>
            <svg class="ar" width="7" height="4"><use href="#i-down"/></svg>
            <svg width="17" height="16"><use href="#i-cube"/></svg>
            <svg class="ar" width="7" height="4"><use href="#i-down"/></svg>
            <svg width="17" height="16"><path d="M8 1v4M5 3l3-2 3 2M1 8h5M3 6L1 8l2 2M7 9h7v5H7z" fill="none" stroke="#333"/><path d="M5 6q4-3 7 1l3 1-3 1H6z" fill="#2a6fb0"/></svg>
            <svg class="ar" width="7" height="4"><use href="#i-down"/></svg>
            <svg width="17" height="16"><path d="M1 8l9-6 5-1-4 12-3 2H1z" fill="#3c7cc8" stroke="#153a70"/><path d="M1 8h7l7-7" fill="none" stroke="#d8ecff"/></svg>
            <svg class="glass" width="17" height="16"><circle cx="4" cy="10" r="3" fill="none" stroke="#345" stroke-width="1.500"/><circle cx="12" cy="11" r="3" fill="none" stroke="#345" stroke-width="1.500"/><path d="M1 9l4-7 2 1M7 10h2M15 10V5l-3-2" fill="none" stroke="#345"/></svg>
            <svg class="ar" width="7" height="4"><use href="#i-down"/></svg>
            <span class="hot"><svg width="17" height="16"><path d="M1 5l4-4h10v10l-4 4H1zM1 5h10v10M11 5l4-4" fill="#a9c8ea" stroke="#234f8c"/></svg><svg class="ar" width="7" height="4"><use href="#i-down"/></svg></span>
            <svg width="17" height="16"><path d="M1 8l5-6h7l2 4-3 6-4 3H1z" fill="#2a7bc8" stroke="#111" stroke-width="1.500"/><path d="M1 8h7v6M6 5h6v5" fill="none" stroke="#111"/></svg>
            <svg class="ar" width="7" height="4"><use href="#i-down"/></svg>
            <svg class="pick" width="17" height="16"><path d="M1 6l5-5v3h5v4H6v2z" fill="#aaa"/><path d="M9 6v9l2-2 2 3 1-1-2-3h3z" fill="#eee" stroke="#999"/></svg>
            <span class="hot cur"><svg width="12" height="16"><path d="M2 1v12l3-3 2 5 2-1-2-4h4z" fill="#fff" stroke="#000"/></svg></span>
            <svg width="17" height="16"><path d="M1 2h9v8H1z" fill="#fff" stroke="#ccc"/><path d="M8 4v9l2-2 2 4 1-1-2-3h3z" fill="#fff" stroke="#000"/></svg>
        </div>
        <span class="combo dis">缺省<svg width="7" height="4"><use href="#i-down"/></svg></span>
        <span class="combo">任意<svg width="7" height="4"><use href="#i-down"/></svg></span>
        <span class="combo sm">缺省<svg width="7" height="4"><use href="#i-down"/></svg></span>
        <svg class="net" width="17" height="16"><path d="M8 5v5M3 11V8h11v3" fill="none" stroke="#222"/><path d="M6 0h5v5H6z" fill="#d00"/><path d="M0 10h6v5H0z" fill="#2050a0"/><path d="M10 10h6v5h-6z" fill="#e8d040" stroke="#2050a0"/></svg>
    </footer>

    <footer class="taskbar">
        <div class="start"><svg width="38" height="38"><circle cx="19" cy="19" r="17.500" fill="url(#orb)" stroke="#7fa4b8"/><path d="M9 12q5-3 9-1l-1 8q-5-2-9 0z" fill="#f0582a"/><path d="M20 11q5 3 10 1l-2 8q-5 2-9-1z" fill="#8cc63e"/><path d="M8 21q5-2 9 0l-1 8q-5-3-9-1z" fill="#3fa0e8"/><path d="M18 21q5 3 9 1l-1 7q-5 3-9 0z" fill="#fbc928"/></svg></div>
        <div class="task"><svg width="32" height="32"><path d="M27 20q-3 9-12 9T4 17 16 5t12 13H11q1 6 7 5l3-3zM11 14h10q-1-4-5-4t-5 4z" fill="#4db8ee" stroke="#1b78b8"/><path d="M3 29Q-3 22 9 10T30 4" fill="none" stroke="#f3c51c" stroke-width="2.500"/></svg></div>
        <div class="task"><svg width="32" height="32"><path d="M20 5h9v24h-9z" fill="#6ea8cc"/><path d="M3 5h21v24H3z" fill="#a9d0e6" stroke="#5d94b5"/><circle cx="13" cy="17" r="9" fill="#f58220"/><path d="M10 11l9 6-9 6z" fill="#fff"/></svg></div>
        <div class="task open stack"><svg width="32" height="32"><path d="M2 5h10l2 3h15v19H2z" fill="#e8cd70" stroke="#b39238"/><path d="M4 8h24v19H4z" fill="#f7e6a0"/><path d="M4 31v-9q0-3 4-3h16q4 0 4 3v9h-4v-6H8v6z" fill="#9fd0ea" stroke="#5a9cc0"/><path d="M5 3h5M14 4h6" stroke="#3a8" stroke-width="2"/></svg></div>
        <div class="task"><svg width="32" height="32"><circle cx="12" cy="11" r="6" fill="none" stroke="#f04040" stroke-width="5"/><circle cx="12" cy="11" r="10" fill="none" stroke="#f04040" stroke-width="4" stroke-dasharray="4 3.850"/><path d="M14 16h10v12H14z" fill="#fff" stroke="#a33"/><path d="M19 18h8l4 4v9H19z" fill="#fff" stroke="#237"/><path d="M21 23h7M21 25h7M21 27h7" stroke="#237"/></svg></div>
        <div class="task open"><svg width="32" height="32"><path d="M4 20Q2 10 14 7t15 8q-1 5-6 4t-4 5-7 5-8-9z" fill="#c9dff0" stroke="#7a9ab5"/><circle cx="10" cy="14" r="2.500" fill="#4b4"/><circle cx="17" cy="11" r="2.500" fill="#f93"/><circle cx="8" cy="20" r="2.500" fill="#d33"/><circle cx="14" cy="24" r="2.500" fill="#36c"/><path d="M20 29l6-20" stroke="#c87a2a" stroke-width="3"/><path d="M24 9l2-7 5 1-2 7z" fill="#d8a860"/></svg></div>
        <div class="task"><svg width="34" height="34"><path d="M1 6l18-5 13 5v22l-13 5-18-4z" fill="#a8121c"/><path d="M1 6l18-5 13 5-16 4z" fill="#e04048"/><text x="4" y="23" class="sw">SW</text><text x="9" y="33" class="yr">2016</text></svg></div>
        <div class="task open"><svg width="32" height="32"><path d="M2 3h27v27H2z" fill="#0b63b0" stroke="#083e78"/><path d="M2 3h24v24H2z" fill="#0d86d6"/><text x="7" y="21" class="ps">Ps</text></svg></div>
        <div class="task"><svg width="32" height="32"><g fill="none" stroke-width="9"><path d="M16 6a10 10 0 018.700 5" stroke="#c050e8"/><path d="M24.700 11a10 10 0 010 10" stroke="#38a0f0"/><path d="M24.700 21a10 10 0 01-8.700 5" stroke="#40d050"/><path d="M16 26a10 10 0 01-8.700-5" stroke="#e8e030"/><path d="M7.300 21a10 10 0 010-10" stroke="#ff9030"/><path d="M7.300 11a10 10 0 018.700-5" stroke="#f04040"/></g><circle cx="16" cy="16" r="4" fill="#fff"/></svg></div>
        <div class="task open stack"><svg width="32" height="32"><path d="M3 3h27v27H3z" fill="#d04a1a" stroke="#8c2a08"/><path d="M6 6h21v21H6z" fill="none" stroke="#fff" stroke-width="2"/><path d="M10 10h14v14H10z" fill="#fbe8dc"/><circle cx="15" cy="18" r="3.500" fill="#c0400e"/><path d="M10 12h14M20 16h4M20 19h4" stroke="#c0400e" stroke-width="1.500"/></svg></div>
        <div class="task open"><svg width="34" height="32"><ellipse cx="13" cy="12" rx="12" ry="9.500" fill="#7fd83c"/><path d="M5 18l-1 6 6-3z" fill="#7fd83c"/><circle cx="9" cy="9" r="1.500" fill="#161"/><circle cx="17" cy="9" r="1.500" fill="#161"/><ellipse cx="24" cy="20" rx="9.500" ry="8" fill="#f4f4f4"/><path d="M28 26l2 4-6-2z" fill="#f4f4f4"/><circle cx="21" cy="18" r="1.200" fill="#777"/><circle cx="27" cy="18" r="1.200" fill="#777"/></svg></div>
        <div class="task open"><svg width="32" height="32"><circle cx="16" cy="16" r="14" fill="#1b48b0" stroke="#0c2a70"/><ellipse cx="11" cy="15" rx="8" ry="10" fill="#5a86dc"/><path d="M15 3q11 13-1 26M24 5q-9 9 0 22" fill="none" stroke="#fff" stroke-width="2.500"/></svg></div>
        <div class="task open"><svg width="34" height="32"><path d="M10 6L2 9l5 16 8-3M16 8l-8 3 4 16 14-6M22 10l-6 2 3 11 9-4" fill="none" stroke="#18b418" stroke-width="2.500"/><circle cx="28" cy="10" r="3.500" fill="none" stroke="#2a2" stroke-width="1.800"/><path d="M25 12l-7 5" stroke="#2a2" stroke-width="2"/></svg></div>
        <div class="task open"><svg width="32" height="32"><path d="M1 10V4h8M23 4h8v6M31 22v6h-8M9 28H1v-6" fill="none" stroke="#3f8cc0" stroke-width="4"/><path d="M4 6h24v20H4z" fill="#9ad0f5" stroke="#fff" stroke-width="1.500"/><path d="M5 15q6-4 12 0t10 1v5H5z" fill="#3b7a5a"/><path d="M5 20h22v5H5z" fill="#2c6a90"/></svg></div>
        <div class="task open cur"><svg width="32" height="32"><use href="#i-caxa"/></svg></div>
        <div class="tray">
            <svg width="15" height="15"><path d="M0 0h15v15H0z" fill="#f0501e" stroke="#fff"/><path d="M11 4q-6-2-7 1t6 2q3 4-6 4" fill="none" stroke="#fff" stroke-width="2"/></svg>
            <svg width="16" height="16"><circle cx="8" cy="8" r="7.300" fill="#1d47b8" stroke="#cdd8f5"/><path d="M6 6q0-2 2-2t2 2-2 3" fill="none" stroke="#fff" stroke-width="1.800"/><circle cx="8" cy="11.500" r="1" fill="#fff"/></svg>
            <svg class="lang" width="9" height="20"><use href="#i-restore" width="8" height="8"/><path d="M2 14h5l-2.500 3z" fill="#fff"/></svg>
            <svg class="up" width="8" height="5"><path d="M4 0l4 5H0z" fill="#fff"/></svg>
            <svg width="16" height="16"><path d="M8 0q4 2 7 2 0 10-7 14Q1 12 1 2q4 0 7-2z" fill="#3caa30" stroke="#e8f8e0"/><path d="M9 3L5 9h3l-1 4 4-6H8z" fill="#fff"/></svg>
            <svg width="16" height="16"><circle cx="8" cy="8" r="7.500" fill="#f4c818"/><path d="M8 .5a7.500 7.500 0 010 15z" fill="#38a830"/><path d="M8 4v8M4 8h8" stroke="#163" stroke-width="3"/></svg>
            <svg width="16" height="16"><circle cx="8" cy="8" r="7.500" fill="#1018d8"/><path d="M7 2q6 6 1 12M12 3q-5 5-1 10" fill="none" stroke="#fff"/></svg>
            <svg width="16" height="16"><path d="M2 1v14" stroke="#fff" stroke-width="1.500"/><path d="M3 2q4-1 6 1h4v6H8q-2-2-5-1z" fill="#ddd"/><circle cx="11" cy="11" r="4.500" fill="#d83030"/><path d="M9 9l4 4M13 9l-4 4" stroke="#fff" stroke-width="1.300"/></svg>
            <svg width="16" height="16"><path d="M5 4h10v8H5zM7 15h7M10 12v3M2 1v4h3M2 5v9h4" fill="none" stroke="#fff" stroke-width="1.300"/></svg>
            <svg width="16" height="16"><path d="M1 6h3l4-4v12l-4-4H1z" fill="#eee"/><path d="M10 5q2 3 0 6M12 3q4 5 0 10" fill="none" stroke="#eee"/></svg>
            <div class="clock">17:27<br>2019/11/5</div>
            <i class="desk"></i>
        </div>
    </footer>
</div>

<!-- 标注层 -->
<div class="notes">
    <svg width="1920" height="1080">
        <rect x="498.500" y="57.500" width="349.500" height="97" rx="15"/>
        <rect x="1535.500" y="247.500" width="337" height="511" rx="15"/>
        <path d="M572 157L458 666M450 623l8 45 23-38M527 801l163 60M676 843l15 18-23 3"/>
    </svg>
    <p class="note n1">添加动画，观<br>看门的开合</p>
    <p class="note n2">动画种类丰富齐全</p>
</div>
</body>
</html>
```
FILE: styles.css
```css
*,
*:before,
*:after{
    box-sizing:border-box;
}
body{
    margin:0;
    overflow:hidden;
    font:12px/16px "Open Sans","Noto Sans CJK SC",sans-serif;
    color:#444;
    background:#e6e6e6;
}
ul{
    list-style:none;
    margin:0;
    padding:0;
}
svg{
    display:block;
    flex:none;
}
.defs{
    position:absolute;
}
.app{
    width:1920px;
    height:1080px;
    display:grid;
    grid-template-rows:56px 99px 25px 836px 24px 40px;
    white-space:nowrap;
}

/* 标题栏 */
.top{
    background:#2b579a;
    color:#fff;
}
.titlebar{
    height:30px;
    display:flex;
    align-items:flex-start;
}
.logo{
    margin:4px 0 0 2px;
}
.quick{
    display:flex;
    gap:8px;
    margin-left:11px;
}
.quick svg{
    margin-top:3px;
}
.quick-on{
    width:22px;
    height:22px;
    padding-left:3px;
    margin:0 -3px;
    background:#3067b5;
}
.quick .more{
    margin:7px 0 0 1px;
}
.title{
    width:300px;
    margin:6px 0 0 636px;
    text-align:center;
    font-size:11.500px;
}
.winbtns{
    display:flex;
    gap:26px;
    margin:6px 13px 0 auto;
}
.tabs{
    display:flex;
    height:26px;
}
.tabs a{
    padding:5px 14px 0;
}
.tabs .first{
    padding:5px 20px 0 19px;
}
.tabs .active{
    margin:0 1px 0 2px;
    padding:5px 13px 0;
    background:#f1f1f1;
    color:#1e63b8;
    border-right:1px solid #f1f1f1;
}
.tabs-right{
    display:flex;
    align-items:center;
    margin:-1px 6px 0 auto;
}
.tabs-right svg{
    margin-left:9px;
}
.tabs-right .help{
    margin-left:7px;
}
.tabs-right .help + svg{
    margin-right:-2px;
}

/* 功能区 */
.ribbon{
    display:flex;
    background:#f1f1f1;
    border:1px solid #d2d2d2;
}
.group{
    height:91px;
    margin-top:3px;
    border-right:1px solid #d2d2d2;
}
.g1{ width:168px; }
.g2{ width:332px; }
.g3{ width:335px; }
.group-body{
    display:flex;
    height:74px;
    padding-left:6px;
}
.group-name{
    text-align:center;
    color:#666;
}
.big{
    width:53px;
    padding-top:4px;
    display:flex;
    flex-direction:column;
    align-items:center;
}
.big span{
    margin:3px 0 4px;
}
.big.cam{
    width:62px;
}
.g2 .group-body{
    padding-left:6px;
}
.g3 .group-body{
    padding-left:7px;
}
.big.anim{
    width:86px;
}
.off{
    color:#aeaeae;
}
.small-col{
    padding-top:1px;
}
.small-col > div{
    display:flex;
    align-items:center;
    gap:3px;
    height:22px;
}
.c1{ margin-left:3px; }
.c1 > div{ gap:4px; }
.c2{ width:70px; }
.c3{ margin-left:2px; }
.c4{ width:50px; margin-left:1px; }
.c4 > div{
    padding-left:3px;
}
.c4 .on{
    background:#e0e0e0;
}
.c5{ margin-left:4px; width:86px; }
.c5 > div{ gap:2px; }
.c6{ margin-left:4px; }
.small-col .ar{
    margin-left:2px;
}
.small-col .slider{
    height:22px;
    background:linear-gradient(#aaa,#aaa) 0 10px/82px 1px no-repeat;
}
.slider i{
    width:4px;
    height:13px;
    margin-top:-4px;
    background:#aaa;
}

.menubar{
    display:flex;
    gap:15px;
    padding:4px 0 0 4px;
}
.grip{
    width:2px;
    height:11px;
    margin:3px -4px 0 0;
    background:repeating-linear-gradient(#999 0 2px,transparent 2px 4px);
}

/* 主体 */
.body{
    display:flex;
}
.work{
    width:1540px;
}
.docbar{
    display:flex;
    justify-content:space-between;
    height:21px;
    border-bottom:1px solid #a8a8a8;
}
.doctab{
    position:relative;
    display:flex;
    align-items:center;
    width:205px;
    height:21px;
    padding-left:35px;
}
.doctab b{
    position:relative;
    width:155px;
    font-size:12px;
    font-weight:600;
}
.doctab .tabshape{
    position:absolute;
    left:0;
    top:0;
}
.doctab > svg{
    position:relative;
}
.doclist{
    margin:9px 7px 0 0;
    color:#666;
}
.work-row{
    display:flex;
    height:814px;
}
.left{
    width:231px;
    padding-right:5px;
}
.panel-head{
    display:flex;
    align-items:center;
    gap:10px;
    height:25px;
    padding:0 8px 0 4px;
    color:#555;
}
.panel-head span{
    flex:1;
}
.search{
    display:flex;
    align-items:center;
    height:20px;
    background:#fff;
    color:#666;
}
.search span:not(.tan){
    flex:1;
    align-self:flex-start;
    line-height:15px;
}
.left .search{
    width:225px;
    padding-left:1px;
}
.tan{
    margin-left:2px;
    padding:1px;
    background:#ece9d8;
}
.tree{
    display:flex;
    flex-direction:column;
    justify-content:space-between;
    height:746px;
    width:225px;
    overflow:hidden;
    background:#fff;
    border:1px solid #828790;
    border-left-color:#aaa;
    color:#000;
}
.tree ul{
    position:relative;
    padding-top:2px;
    width:222px;
    overflow:hidden;
}
.tree ul:before,
.tree ul:after{
    content:"";
    position:absolute;
    left:12px;
    top:20px;
    height:226px;
    border-left:1px dotted #888;
}
.tree ul:after{
    left:31px;
    top:74px;
    height:91px;
}
.tree li{
    position:relative;
    z-index:1;
    display:flex;
    align-items:center;
    height:18px;
    white-space:pre;
}
.root{
    letter-spacing:.2px;
}
.root svg{
    margin:0 5px 0 4px;
}
.l1{
    padding-left:8px;
}
.l2{
    padding-left:27px;
}
.l1 svg,
.l2 svg{
    margin:0 5px 0 6px;
}
.l1:before,
.l2:before{
    content:"";
    position:absolute;
    left:17px;
    width:6px;
    border-top:1px dotted #888;
}
.l2:before{
    left:36px;
}
.ex{
    flex:none;
    width:9px;
    height:9px;
    border:1px solid #919191;
    background:#fff;
    color:#234a9c;
    font:10px/6px "DejaVu Sans",sans-serif;
    text-align:center;
}
.ex.none{
    height:1px;
    border:0;
    background:none;
}
.hscroll{
    display:flex;
    align-items:center;
    height:17px;
    padding:0 7px;
    background:#ececec;
}
.thumb{
    width:75px;
    height:15px;
    margin:0 auto 0 7px;
    border:1px solid #999;
    border-radius:2px;
    background:linear-gradient(#f5f5f5,#d0d0d2);
    font:8px/13px "Liberation Sans",sans-serif;
    letter-spacing:1px;
    text-align:center;
}
.left-tabs{
    display:flex;
    height:22px;
}
.left-tabs a{
    display:flex;
    align-items:center;
    gap:2px;
    padding:0 3px 0 5px;
}
.left-tabs .active{
    width:76px;
    padding:0 0 0 3px;
    background:#fff;
    border:1px solid #aaa;
    border-top:0;
}

.view{
    width:1305px;
    background:linear-gradient(#5178a5,#a2b5cf 46%,#fff);
    border-left:1px solid #777;
    overflow:hidden;
}
.frame{
    fill:#968a80;
    stroke:#000;
    stroke-width:2;
}
.seam{
    fill:none;
    stroke:#000;
    stroke-width:1.200;
}
.heavy{
    stroke-width:2.500;
    stroke-dasharray:22 1;
}
.dash{
    fill:none;
    stroke:#000;
    stroke-width:2.500;
}
.axis text{
    font:bold 9px "Liberation Sans",sans-serif;
}

/* 右侧元素库 */
.right{
    width:380px;
    padding-left:1px;
    border-left:3px solid #dadada;
    margin-top:-1px;
}
.right .panel-head{
    height:25px;
    padding:0 7px 0 4px;
}
.lib-btns{
    display:flex;
    gap:2px;
    height:20px;
    padding:1px 0 1px 1px;
}
.lib-btns button{
    display:flex;
    align-items:center;
    width:92px;
    padding:0 0 0 6px;
    border:1px solid #707070;
    border-radius:2px;
    background:linear-gradient(#f4f4f4 45%,#dadada 50%);
    font:inherit;
    color:#000;
}
.lib-btns span{
    margin-left:21px;
}
.right .search{
    padding-right:1px;
}
.back{
    margin:0 2px 0 1px;
}
.lib{
    display:grid;
    grid-template-columns:repeat(4,74px);
    grid-auto-rows:75px;
    column-gap:1px;
    align-content:start;
    height:749px;
    padding:3px 0 0 1px;
    background:#fff;
    border:1px solid #828790;
    border-width:1px 0 1px 1px;
}
.lib figure{
    margin:0;
    display:flex;
    flex-direction:column;
    align-items:center;
    color:#000;
}
.lib figcaption{
    width:62px;
    margin-top:3px;
    line-height:17px;
    text-align:center;
    white-space:normal;
}
.lib-tabs{
    display:flex;
    align-items:center;
    height:22px;
    padding-right:7px;
}
.lib-tabs a{
    padding:2px 6px 2px 7px;
}
.lib-tabs .active{
    height:22px;
    padding:2px 5px;
    background:#fff;
    border:1px solid #aaa;
    border-top:0;
}
.lib-tabs svg{
    margin-left:auto;
}

/* 状态栏 */
.status{
    display:flex;
    align-items:center;
    background:#f0f0f0;
    border-top:1px solid #c4c4c4;
}
.ime{
    display:flex;
    align-items:center;
    gap:6px;
    width:186px;
    height:23px;
    background:#fff;
    border-right:1px solid #b8cce4;
}
.ime b{
    color:#1c70c8;
    font-size:15px;
}
.ime svg:first-child{
    margin-top:-2px;
}
.st-size{
    width:138px;
    margin-left:880px;
    font-size:11.500px;
}
.st-unit{
    width:93px;
}
.st-icons{
    display:flex;
    align-items:center;
    height:23px;
    width:353px;
}
.st-icons > svg:nth-child(2){
    margin-left:6px;
}
.ar{
    margin:0 5px;
}
.glass{
    margin-left:7px;
}
.glass + .ar{
    margin:0 3px;
}
.hot{
    display:flex;
    align-items:center;
    height:21px;
    margin-right:6px;
    padding-left:3px;
    background:#cfcfcf;
}
.hot .ar{
    margin:0 2px 0 3px;
}
.hot.cur{
    width:23px;
    padding-left:6px;
    margin:0 5px 0 3px;
}
.combo{
    display:flex;
    align-items:center;
    justify-content:space-between;
    width:88px;
    height:21px;
    margin-right:2px;
    padding:0 3px 0 1px;
    background:#fff;
    border:1px solid #bbb;
}
.combo.dis{
    background:#e6e6e6;
    color:#aaa;
}
.combo.sm{
    width:64px;
    margin-right:4px;
}

/* 任务栏 */
.taskbar{
    display:flex;
    gap:4px;
    background:linear-gradient(90deg,#5f3a36,#8c564e 180px,#8c564e 1550px,#6a423e 1590px);
    border-top:1px solid #2a1c1c;
    box-shadow:inset 0 1px #a98a88;
}
.start{
    width:56px;
    padding-left:8px;
}
.task{
    display:flex;
    align-items:center;
    justify-content:center;
    width:58px;
    height:39px;
}
.task.open{
    border:1px solid #d0b8b4;
    border-radius:3px;
    outline:1px solid #45292a;
    background:linear-gradient(160deg,#cbb4b0,#a87e78 45%,#9a6a64 50%,#95645d);
}
.task.stack{
    width:52px;
    margin-right:6px;
    box-shadow:3px 0 0 #95645d,4px 0 0 #d0b8b4;
}
.task.cur{
    background:linear-gradient(160deg,#f4ecea,#d4bcb8 45%,#c4a29e);
}
.sw{
    font:bold 15px "Liberation Sans",sans-serif;
    fill:#fff;
}
.yr{
    font:bold 10px "Liberation Sans",sans-serif;
    fill:#fff;
    stroke:#000;
    stroke-width:2px;
    paint-order:stroke;
}
.ps{
    font:bold 14px "Open Sans",sans-serif;
    fill:#8fe0ff;
}
.tray{
    display:flex;
    align-items:center;
    gap:8px;
    margin-left:auto;
    color:#fff;
}
.tray > svg{
    margin-top:3px;
}
.tray > svg:nth-child(1){
    margin:-6px 0 0;
}
.tray > svg:nth-child(2){
    margin:-6px 0 0;
}
.tray .lang{
    margin:-6px 0 0 2px;
}
.tray .up{
    margin-right:4px;
}
.clock{
    width:66px;
    margin-left:3px;
    text-align:center;
    line-height:18px;
}
.desk{
    width:14px;
    height:38px;
    margin-left:-3px;
    border:1px solid #a58a86;
    background:linear-gradient(150deg,#a08480,#54302e 50%);
}

/* 标注 */
.notes{
    position:absolute;
    left:0;
    top:0;
    width:1920px;
    height:1080px;
    pointer-events:none;
}
.notes svg{
    fill:none;
    stroke:#ed1c24;
    stroke-width:5;
    stroke-linecap:round;
    stroke-linejoin:round;
}
.note{
    position:absolute;
    margin:0;
    font:300 48.500px/62px "KaiTi","Noto Sans CJK SC",sans-serif;
    color:#ed1c24;
    white-space:nowrap;
}
.n1{
    left:344px;
    top:855px;
}
.n2{
    left:1495px;
    top:781px;
}
```
